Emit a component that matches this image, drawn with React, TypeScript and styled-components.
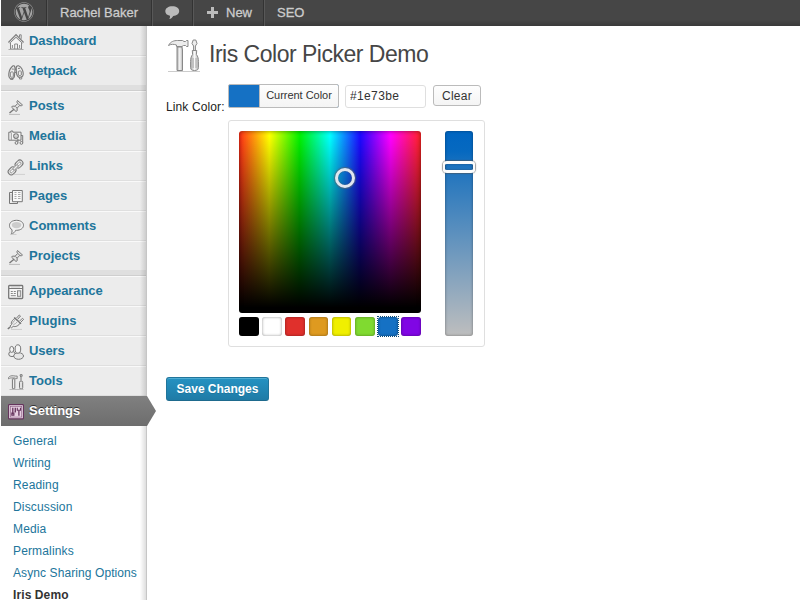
import React from "react";
import styled, { createGlobalStyle } from "styled-components";
import { FaWordpress } from "react-icons/fa";

const GlobalStyle = createGlobalStyle`
  * { box-sizing: border-box; }
  html, body { margin: 0; padding: 0; background: #fff; }
  body {
    width: 800px;
    height: 600px;
    overflow: hidden;
    font-family: "Liberation Sans", Arial, sans-serif;
    font-size: 12px;
    color: #333;
  }
`;

const Page = styled.div`
  display: flex;
  flex-direction: column;
  width: 799px;
  height: 600px;
  margin-left: 1px;
  overflow: hidden;
`;

const AdminBar = styled.header`
  display: flex;
  flex: 0 0 26px;
  background: linear-gradient(to bottom, #464646 0, #464646 20px, #3a3a3a 26px);
  color: #ccc;
`;

const BarItem = styled.div<{ $width: number; $left: number; $spacing?: number; $last?: boolean }>`
  display: flex;
  align-items: center;
  width: ${(p) => p.$width}px;
  height: 26px;
  padding: 0 0 2px ${(p) => p.$left}px;
  border-right: ${(p) => (p.$last ? "none" : "1px solid #333")};
  box-shadow: ${(p) => (p.$last ? "none" : "1px 0 0 #585858")};
  font-size: 13px;
  letter-spacing: ${(p) => p.$spacing ?? 0}px;
  -webkit-text-stroke: 0.3px #ccc;
  text-shadow: 0 -1px 0 #444;
  white-space: nowrap;
  svg { flex: none; }
`;

const PlusIcon = styled.svg`
  margin-right: 8px;
`;

const Body = styled.div`
  display: flex;
  flex: 1;
  min-height: 0;
`;

const Sidebar = styled.nav`
  position: relative;
  flex: 0 0 146px;
  min-width: 0;
  border-right: 1px solid #c6c6c6;
  background: #fff;
  &::after {
    content: "";
    position: absolute;
    top: 0;
    right: 0;
    bottom: 0;
    width: 6px;
    background: linear-gradient(to right, rgba(0, 0, 0, 0), rgba(0, 0, 0, 0.13));
  }
`;

const MenuRow = styled.div<{ $flat?: boolean }>`
  display: flex;
  height: 30px;
  padding-left: 7px;
  background: #ececec;
  border-top: 1px solid ${(p) => (p.$flat ? "#ececec" : "#f9f9f9")};
  border-bottom: 1px solid #dfdfdf;
`;

const CurrentRow = styled(MenuRow)`
  position: relative;
  z-index: 1;
  width: 146px;
  border: 0;
  padding-top: 1px;
  background: linear-gradient(to bottom, #808080, #6d6d6d);
  &::after {
    content: "";
    position: absolute;
    left: 146px;
    top: 0;
    width: 9px;
    height: 30px;
    background: linear-gradient(to bottom, #808080, #6d6d6d);
    clip-path: polygon(0 0, 9px 15px, 0 30px);
  }
`;

const Separator = styled.div`
  height: 5px;
  background: #dfdfdf;
  border-bottom: 1px solid #cfcfcf;
`;

const MenuIcon = styled.svg`
  width: 16px;
  height: 16px;
  flex: none;
  margin: 7px 5px 0 0;
  overflow: visible;
`;

const MenuText = styled.span<{ $current?: boolean; $spacing?: number }>`
  font-size: 13px;
  font-weight: bold;
  line-height: 28px;
  letter-spacing: ${(p) => p.$spacing ?? 0}px;
  color: ${(p) => (p.$current ? "#fff" : "#21759b")};
  text-shadow: ${(p) => (p.$current ? "0 -1px 0 #333" : "none")};
`;

const SubMenu = styled.div`
  display: flex;
  flex-direction: column;
  padding: 4px 0 0 12px;
`;

const SubItem = styled.a<{ $current?: boolean; $spacing: number }>`
  height: 22px;
  line-height: 22px;
  font-size: 12px;
  white-space: nowrap;
  letter-spacing: ${(p) => p.$spacing}px;
  font-weight: ${(p) => (p.$current ? "bold" : "normal")};
  color: ${(p) => (p.$current ? "#333" : "#21759b")};
`;

const Content = styled.main`
  flex: 1;
  padding: 12px 0 0 19px;
`;

const Heading = styled.div`
  display: flex;
  height: 46px;
`;

const ToolsLogo = styled.svg`
  width: 36px;
  height: 36px;
  margin: 0 7px 0 0;
`;

const Title = styled.h1`
  margin: 0;
  font-size: 23px;
  font-weight: normal;
  line-height: 32px;
  letter-spacing: -0.49px;
  color: #464646;
`;

const Field = styled.div`
  display: flex;
  align-items: flex-start;
`;

const Label = styled.label`
  width: 62px;
  padding-top: 16px;
  line-height: 14px;
  letter-spacing: 0.12px;
  color: #222;
  white-space: nowrap;
`;

const Controls = styled.div`
  display: flex;
  align-items: flex-start;
`;

const CurrentColor = styled.button`
  display: flex;
  width: 111px;
  height: 24px;
  padding: 0;
  border: 1px solid #bbb;
  border-radius: 2px;
  overflow: hidden;
  background: #1571c4;
`;

const CurrentColorText = styled.span`
  width: 79px;
  height: 22px;
  margin-left: auto;
  border-left: 1px solid #bbb;
  background: linear-gradient(to bottom, #fefefe, #f4f4f4);
  font: 11px/21px "Liberation Sans", Arial, sans-serif;
  letter-spacing: -0.03px;
  color: #333;
  text-align: center;
  white-space: nowrap;
`;

const HexInput = styled.input`
  width: 81px;
  height: 23px;
  margin: 1px 7px 0 6px;
  padding: 0 4px 2px;
  border: 1px solid #dfdfdf;
  border-radius: 3px;
  font: 12px "Liberation Sans", Arial, sans-serif;
  letter-spacing: 0.36px;
  color: #333;
  outline: none;
`;

const ClearButton = styled.button`
  width: 48px;
  height: 21px;
  margin-top: 1px;
  padding: 1px 0 0;
  border: 1px solid #bbb;
  border-radius: 3px;
  background: linear-gradient(to bottom, #fefefe, #f4f4f4);
  font: 12px/18px "Liberation Sans", Arial, sans-serif;
  letter-spacing: 0.25px;
  color: #333;
`;

const Picker = styled.div`
  display: flex;
  justify-content: space-between;
  width: 257px;
  height: 227px;
  margin: 6px 0 30px 62px;
  padding: 10px 11px 10px 10px;
  border: 1px solid #dfdfdf;
  border-radius: 3px;
`;

const PickerMain = styled.div`
  display: flex;
  flex-direction: column;
  justify-content: space-between;
  width: 182px;
  height: 205px;
`;

const Square = styled.div`
  position: relative;
  width: 182px;
  height: 182px;
  border-radius: 3px;
  background:
    linear-gradient(to bottom, rgba(0, 0, 0, 0) 3%, #000 97%),
    linear-gradient(to right, #ff2d17, #ff0 16.67%, #00f000 33.33%, #00ffff 50%, #1c08ff 66.67%, #ff00ff 83.33%, #ff2323);
  box-shadow: inset 0 0 4px rgba(0, 0, 0, 0.45);
`;

const SquareHandle = styled.div`
  position: absolute;
  left: 96px;
  top: 37px;
  width: 20px;
  height: 20px;
  border: 3px solid #e2e6ee;
  border-radius: 50%;
  box-shadow: 0 0 1px 1px rgba(90, 100, 110, 0.7), inset 0 0 1px 0.5px rgba(80, 90, 110, 0.6);
`;

const Palette = styled.div`
  display: flex;
  justify-content: space-between;
`;

const Swatch = styled.a<{ $color: string; $selected?: boolean }>`
  width: 19.6px;
  height: 19px;
  border-radius: 3px;
  background: ${(p) => p.$color};
  box-shadow: inset 0 0 3px rgba(0, 0, 0, 0.42);
  position: relative;
  &::after {
    content: "";
    display: ${(p) => (p.$selected ? "block" : "none")};
    position: absolute;
    inset: -1px;
    border: 1px dotted #0b4a75;
  }
`;

const Strip = styled.div`
  position: relative;
  width: 28px;
  height: 205px;
  border-radius: 3px;
  background: linear-gradient(to bottom, #0065c1, #0669c0 10%, #1e73be 18%, #5c90be 50%, #bebebe);
  box-shadow: inset 0 0 3px rgba(0, 0, 0, 0.4);
`;

const StripHandle = styled.div`
  position: absolute;
  left: -2px;
  top: 30px;
  width: 32px;
  height: 12px;
  border: 3px solid #fcfcfc;
  border-left-width: 2px;
  border-right-width: 2px;
  border-radius: 4px;
  box-shadow: 0 0 1px 1px rgba(80, 80, 80, 0.55), inset 0 0 1px 0.5px rgba(40, 50, 60, 0.3);
`;

const SaveButton = styled.button`
  width: 103px;
  height: 24px;
  padding: 0;
  border: 1px solid #21759b;
  border-bottom-color: #1e6a8d;
  border-radius: 3px;
  background: linear-gradient(to bottom, #2592c2, #1f7ba6);
  box-shadow: inset 0 1px 0 rgba(120, 200, 230, 0.5);
  font: bold 12px/22px "Liberation Sans", Arial, sans-serif;
  letter-spacing: -0.02px;
  color: #fff;
  text-shadow: 0 1px 0 rgba(0, 0, 0, 0.1);
`;

const pin = (
  <>
    <path d="M9.500 1.500l5 4.500-1.200.8-1.600-.2-2.600 2.500.1 2.600-1.200.8L3.600 8.200l.9-1.100 2.600.1L9.600 4.600l-.7-1.700z" fill="#e4e4e4" stroke="#777" />
    <path d="M6 10.300L1.500 14" stroke="#777" strokeWidth="1.400" />
    <path d="M10 4.700l2 1.800M7.300 7.400l1.800 1.700" stroke="#888" />
    <path d="M1 15.400h11" stroke="#bbb" />
  </>
);

const icons: Record<string, React.ReactNode> = {
  Dashboard: (
    <>
      <path d="M2.500 8.500v6.500h11V8.500L8 3.300z" fill="#f4f4f4" stroke="#888" />
      <path d="M.7 8.800L8 1.300l7.300 7.500" stroke="#808080" strokeWidth="2" />
      <path d="M1.200 8.800L8 1.900l6.800 6.900" stroke="#eee" strokeWidth=".8" />
      <path d="M11.500 3V.8h1.700v4M6.700 15v-5h2.800v5M4.400 11v3M11.600 11v3" stroke="#888" />
      <path d="M.5 15.500h15" stroke="#aaa" />
    </>
  ),
  Jetpack: (
    <>
      <path d="M4.700 2c-1.200 1-3.500 3.500-3.900 7.700-.3 3.200.8 5 2.700 5s3.100-1.500 3.100-4.200C6.600 7.500 7.500 5 6.800 3c-.4-1.100-1.300-1.600-2.100-1zM10.400 1.700c-1.600-.2-2.300 1-2.200 2.900.1 2.500.1 4.500.6 6 .6 2 1.800 2.900 3.400 2.700 2-.2 3.200-1.500 3-4-.2-3-2.200-7.200-4.800-7.600z" fill="#ececec" stroke="#777" strokeWidth="1.100" />
      <path d="M3.800 5l2 .2M2.300 8.500c1-.8 2.400-.8 3 0v4c-.8 1-2 1-3 0zM10 4.500l2-.3M10.300 7.500c1-.8 2.300-.8 3 0v3.500c-.8.8-2 .8-3 0zM6.800 5.500h1.500M6.500 8.500h2" stroke="#808080" strokeWidth="1" />
      <path d="M2.500 14.500v1H5v-1M11.500 13.500V15h2.200v-2" stroke="#888" />
    </>
  ),
  Posts: pin,
  Projects: pin,
  Media: (
    <>
      <path d="M.8 3.200h2V2h2v1.200h8.200v8H.8z" fill="#f5f5f5" stroke="#777" />
      <path d="M3.300 3.500v7.500" stroke="#999" />
      <circle cx="8" cy="7.100" r="2.300" fill="#eee" stroke="#777" strokeWidth="1.100" />
      <circle cx="8" cy="7.100" r=".7" fill="#888" />
      <path d="M9.900 13.500V10M14.700 13.500V6.500h-1.700" stroke="#777" />
      <circle cx="8.500" cy="13.900" r="1.400" fill="#eee" stroke="#777" />
      <circle cx="13.400" cy="13.900" r="1.400" fill="#eee" stroke="#777" />
    </>
  ),
  Links: (
    <>
      <g transform="rotate(-45 8 8)">
        <rect x="8" y="4.900" width="8.500" height="6.200" rx="3.100" fill="#e7e7e7" stroke="#777" />
        <rect x="10" y="6.900" width="4.500" height="2.200" rx="1.100" fill="#f8f8f8" stroke="#888" strokeWidth=".8" />
        <rect x="-1.800" y="4.900" width="8.500" height="6.200" rx="3.100" fill="#e7e7e7" stroke="#777" />
        <rect x=".2" y="6.900" width="4.500" height="2.200" rx="1.100" fill="#f8f8f8" stroke="#888" strokeWidth=".8" />
        <rect x="4.200" y="6.900" width="6.500" height="2.200" rx="1.100" fill="#eee" stroke="#888" strokeWidth=".8" />
      </g>
      <path d="M6 15.400h11" stroke="#d0d0d0" />
    </>
  ),
  Pages: (
    <>
      <path d="M4.500 3.500h-3v11h8v-2" fill="#eee" stroke="#777" />
      <path d="M4.500 1.500h9.800v11.200H4.500z" fill="#f8f8f8" stroke="#777" />
      <path d="M6.500 3.500h2M10 3.500h2.500M6.500 5.500h2M10 5.500h2.500M6.500 7.500h2M10 7.500h2.500M6.500 9.500h2M10 9.500h2.500M2.200 6h1.600M2.200 8h1.600M2.200 10h1.600" stroke="#aaa" />
    </>
  ),
  Comments: (
    <>
      <path d="M8.500 1.300c4.100 0 7 2.100 7 5s-2.900 5-7 5h-.8c-.8 1.800-2.300 3.200-4.700 4 .9-1.400 1.200-2.700 1-4.600C2.200 9.800 1.500 8.100 1.500 6.300c0-2.900 2.900-5 7-5z" fill="#f2f2f2" stroke="#777" />
      <path d="M3.700 5.800c.4-1.800 2.200-2.800 4.800-2.800s4.500 1 4.900 2.800c0 2-2 3.400-4.900 3.400S3.700 7.800 3.700 5.800z" fill="#ccc" />
      <path d="M2.500 15.400h6" stroke="#ccc" />
    </>
  ),
  Appearance: (
    <>
      <rect x=".7" y="1.500" width="14" height="13" rx=".8" fill="#f7f7f7" stroke="#777" strokeWidth="1.300" />
      <path d="M1 4.500h13.500" stroke="#777" />
      <path d="M3 3h9" stroke="#bbb" strokeWidth=".8" />
      <path d="M2.800 7.500h2M5.800 7.500h2M2.800 9.500h2M5.800 9.500h2M2.800 11.700h5" stroke="#888" />
      <rect x="9.500" y="6.800" width="3.200" height="5.500" fill="#e6e6e6" stroke="#888" />
    </>
  ),
  Plugins: (
    <>
      <path d="M7.200 4.300l5 4.800c-1.400 2.400-4.400 4.200-7 3.200l-1.600 1.500-1.700-1.600 1.700-1.600C2.600 8.400 4.500 5.700 7.200 4.300z" fill="#ececec" stroke="#777" />
      <path d="M6.200 3.500l6.800 6.300" stroke="#777" strokeWidth="1.500" />
      <path d="M8.300 4.300l3-3.300 1.200 1-2.900 3.300M11.300 7.400l3.100-3.100 1.200 1-3.200 3.300" fill="#f5f5f5" stroke="#777" />
      <path d="M7 6.200c-1.400 1.100-2.300 2.300-2.500 3.700M9 8c-1 1.400-2 2-3.500 2.500" stroke="#aaa" />
      <path d="M2 13.200L-.2 15" stroke="#777" strokeWidth="1.500" />
      <path d="M3 15.400h11" stroke="#ccc" />
    </>
  ),
  Users: (
    <>
      <ellipse cx="4" cy="10" rx="3.300" ry="2.600" fill="#eee" stroke="#777" />
      <ellipse cx="3.700" cy="5.400" rx="2" ry="3" fill="#f5f5f5" stroke="#777" />
      <ellipse cx="10.600" cy="12" rx="4.900" ry="3.300" fill="#e6e6e6" stroke="#777" />
      <ellipse cx="9.900" cy="5" rx="2.800" ry="4.200" fill="#f5f5f5" stroke="#777" />
    </>
  ),
  Tools: (
    <>
      <path d="M.5 3.500C1.600 1.900 3.400 1.500 5.500 1.700l1.600.3h2.100v2.600H7.200l-.8-.6H3.500c-1 0-1.800.1-3 .9z" fill="#ddd" stroke="#777" strokeWidth=".8" />
      <rect x="4.400" y="4.800" width="2.400" height="10" rx=".5" fill="#eee" stroke="#777" />
      <path d="M13 6.500V3l-.8-1V.7h1.900V2l-.6 1" fill="#ddd" stroke="#777" />
      <rect x="11.500" y="7" width="3.200" height="8" rx="1.400" fill="#e3e3e3" stroke="#777" />
      <path d="M1.500 15.500h14" stroke="#bbb" />
    </>
  ),
  Settings: (
    <>
      <rect x=".6" y=".6" width="14.800" height="14.200" rx=".6" fill="#f5e6f2" stroke="#65355d" strokeWidth="1.200" />
      <rect x="2.300" y="2.300" width="11.400" height="10.800" fill="#e6cfe1" stroke="#8d6085" strokeWidth=".7" />
      <path d="M4.800 3.700v5M7.300 3.700v4M10.900 6.500v5.300M4 9.500h1.700" stroke="#65355d" strokeWidth="1.300" />
      <path d="M3.800 8.500v2.600h2.100V8.500M7.300 7v1.500M9.300 3.700v2.600h3.200V3.700" stroke="#65355d" strokeWidth="1.100" />
    </>
  ),
};

const groups: string[][] = [
  ["Dashboard", "Jetpack"],
  ["Posts", "Media", "Links", "Pages", "Comments", "Projects"],
  ["Appearance", "Plugins", "Users", "Tools"],
];

const menuSpacing: Record<string, number> = {
  Dashboard: -0.05,
  Jetpack: -0.1,
  Appearance: -0.08,
  Plugins: 0.1,
  Users: -0.1,
};

const submenu: [string, number][] = [
  ["General", 0.15],
  ["Writing", 0.1],
  ["Reading", 0.15],
  ["Discussion", 0.15],
  ["Media", 0.15],
  ["Permalinks", 0.15],
  ["Async Sharing Options", 0.09],
];

const swatches = ["#000", "#fff", "#e0302c", "#de9a20", "#f0ef00", "#80da30", "#1571c4", "#8006e4"];

const Glyph = ({ name }: { name: string }) => (
  <MenuIcon viewBox="0 0 16 16" fill="none">{icons[name]}</MenuIcon>
);

export default function App() {
  return (
    <>
      <GlobalStyle />
      <Page>
        <AdminBar>
          <BarItem $width={46} $left={13}><FaWordpress size={20} color="#a5a5a5" /></BarItem>
          <BarItem $width={105} $left={13}>Rachel Baker</BarItem>
          <BarItem $width={41} $left={12}>
            <svg width="16" height="16" viewBox="0 0 16 16">
              <path d="M8.300 2.200c4 0 6.900 2 6.900 4.800s-2.600 4.700-6 4.900c-.8 1.600-2 2.700-4 3 .8-1 .9-2 .7-3.200C3 11.100 1.300 9.500 1.300 7.200c0-3 3-5 7-5z" fill="#bbb" />
            </svg>
          </BarItem>
          <BarItem $width={71} $left={14}>
            <PlusIcon width="11" height="11" viewBox="0 0 11 11"><path d="M4 0h3v4h4v3H7v4H4V7H0V4h4z" fill="#bbb" /></PlusIcon>
            New
          </BarItem>
          <BarItem $width={60} $left={13} $last>SEO</BarItem>
        </AdminBar>
        <Body>
          <Sidebar>
            {groups.map((group, g) => (
              <React.Fragment key={g}>
                {g > 0 && <Separator />}
                {group.map((name) => (
                  <MenuRow key={name} $flat={name === "Dashboard"}>
                    <Glyph name={name} />
                    <MenuText $spacing={menuSpacing[name]}>{name}</MenuText>
                  </MenuRow>
                ))}
              </React.Fragment>
            ))}
            <CurrentRow>
              <Glyph name="Settings" />
              <MenuText $current>Settings</MenuText>
            </CurrentRow>
            <SubMenu>
              {submenu.map(([name, spacing]) => (
                <SubItem key={name} $spacing={spacing}>{name}</SubItem>
              ))}
              <SubItem $current $spacing={0.1}>Iris Demo</SubItem>
            </SubMenu>
          </Sidebar>
          <Content>
            <Heading>
              <ToolsLogo viewBox="0 0 36 36" fill="none">
                <defs>
                  <linearGradient id="handle" x1="0" x2="1">
                    <stop offset="0" stopColor="#aaa" />
                    <stop offset=".5" stopColor="#f8f8f8" />
                    <stop offset="1" stopColor="#b5b5b5" />
                  </linearGradient>
                </defs>
                <path d="M2.500 7.500C4.500 3.500 8 2.500 11.500 2.500h5l1.500 1h1.500l1-1H22v6h-1.500l-1-1H17.500l-1.500 1H10.500V7c-3-1-5.500-1-8 .5z" fill="#ececec" stroke="#888" />
                <path d="M11 9h5l.5 3v20.500H11V12z" fill="url(#handle)" stroke="#888" />
                <path d="M27.600 14V8L26 5.500 27.200 2h2.600L31 5.500 29.400 8v6" fill="#eee" stroke="#888" />
                <path d="M26.300 12.500h4.400l-.3 4c1.600 2 2 4 2 7v6c0 2-1 3-3.900 3s-3.900-1-3.900-3v-6c0-3 .4-5 2-7z" fill="url(#handle)" stroke="#888" />
                <path d="M27.100 20v10M30 20v10" stroke="#aaa" />
                <path d="M2 33.500h32" stroke="#ccc" />
              </ToolsLogo>
              <Title>Iris Color Picker Demo</Title>
            </Heading>
            <Field>
              <Label>Link Color:</Label>
              <Controls>
                <CurrentColor><CurrentColorText>Current Color</CurrentColorText></CurrentColor>
                <HexInput defaultValue="#1e73be" />
                <ClearButton>Clear</ClearButton>
              </Controls>
            </Field>
            <Picker>
              <PickerMain>
                <Square><SquareHandle /></Square>
                <Palette>
                  {swatches.map((color, i) => (
                    <Swatch key={color} $color={color} $selected={i === 6} />
                  ))}
                </Palette>
              </PickerMain>
              <Strip><StripHandle /></Strip>
            </Picker>
            <SaveButton>Save Changes</SaveButton>
          </Content>
        </Body>
      </Page>
    </>
  );
}
